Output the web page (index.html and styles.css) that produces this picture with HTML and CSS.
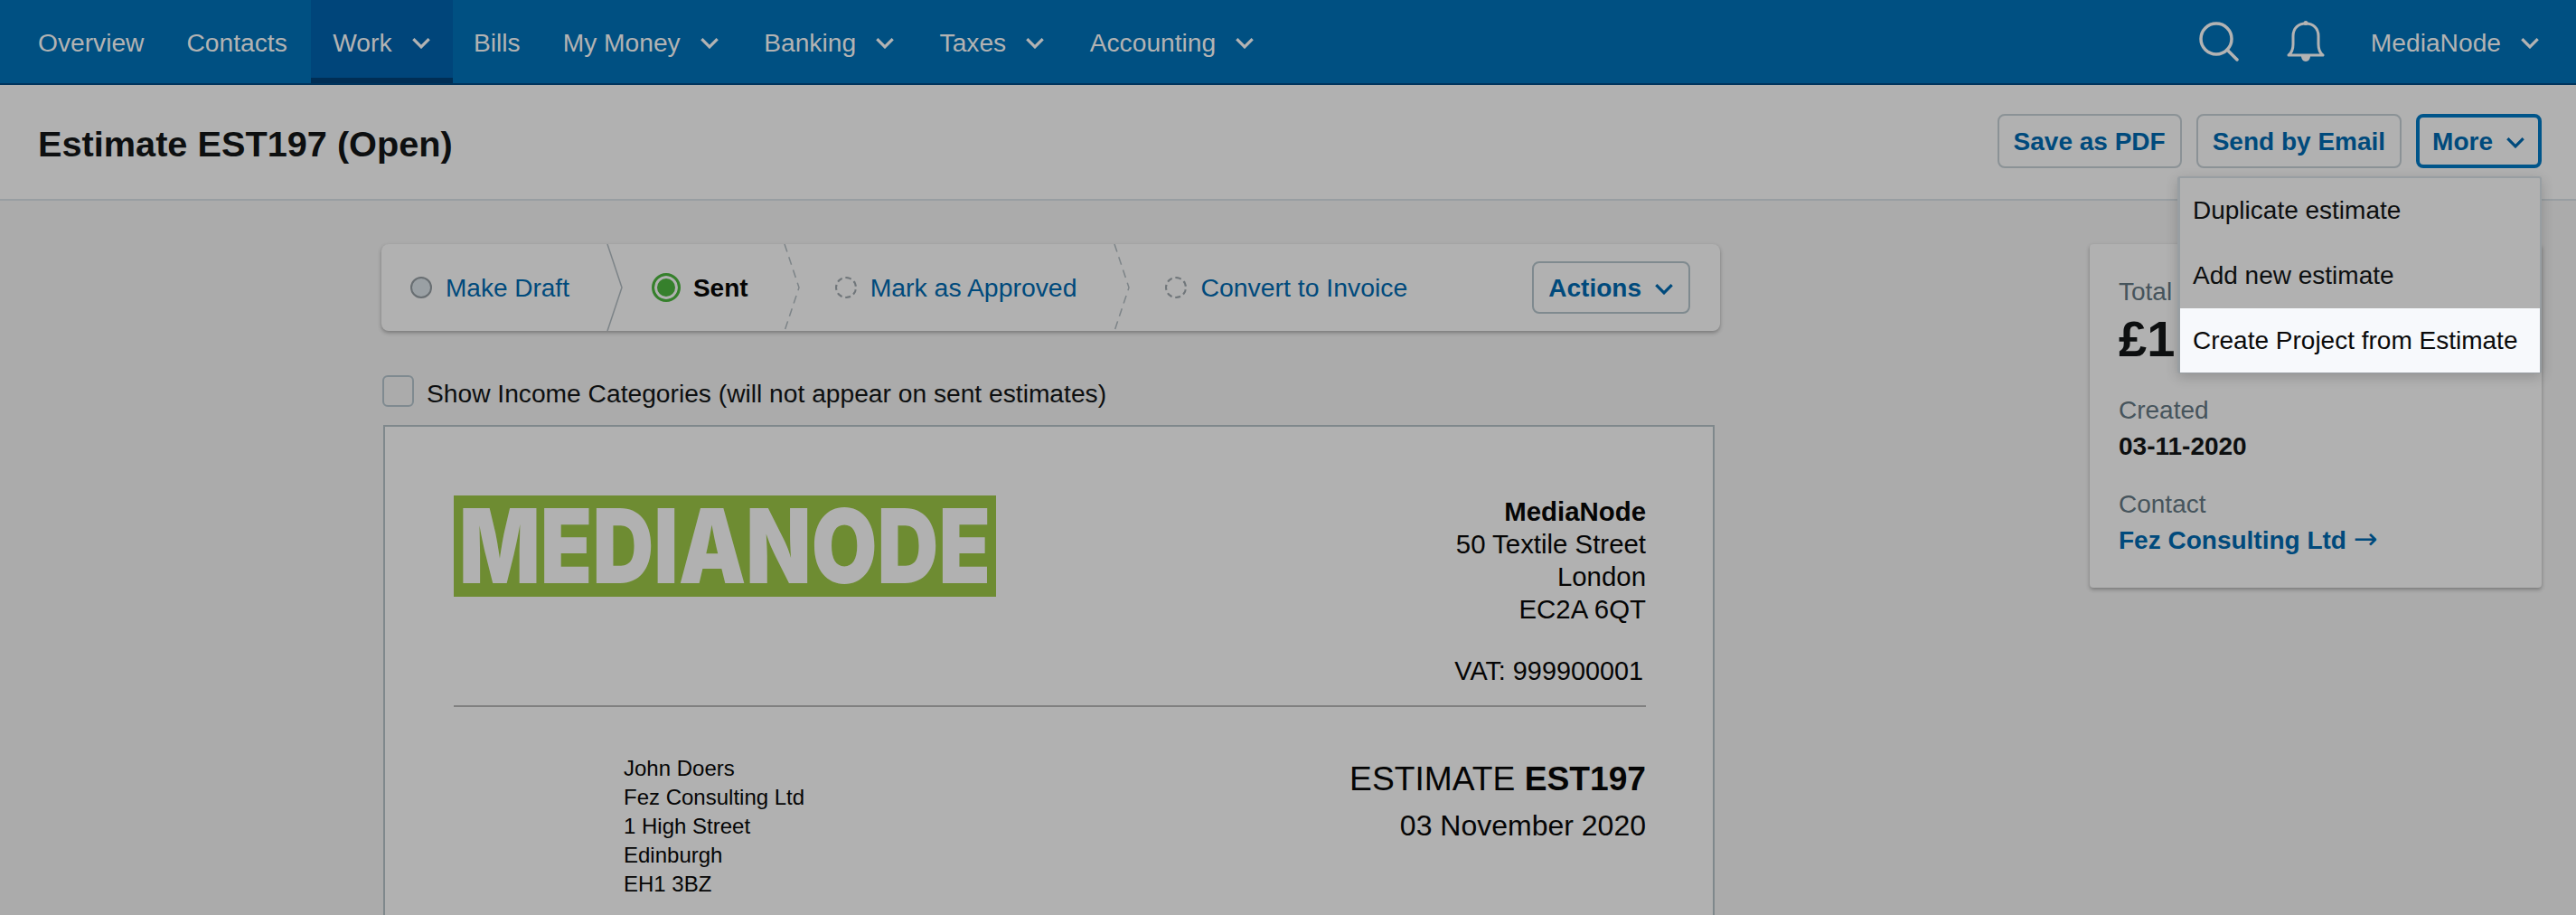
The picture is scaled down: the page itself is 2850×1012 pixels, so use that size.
FILE: index.html
```html
<!DOCTYPE html>
<html lang="en">
<head>
<meta charset="utf-8">
<title>Estimate EST197</title>
<link rel="stylesheet" href="styles.css">
</head>
<body>
<nav class="nav">
  <a class="nav-item">Overview</a>
  <a class="nav-item">Contacts</a>
  <a class="nav-item nav-item-active">Work <svg class="chev" viewBox="0 0 20 12"><path d="M2 2l8 8 8-8"/></svg></a>
  <a class="nav-item">Bills</a>
  <a class="nav-item nav-item-drop">My Money <svg class="chev" viewBox="0 0 20 12"><path d="M2 2l8 8 8-8"/></svg></a>
  <a class="nav-item nav-item-drop">Banking <svg class="chev" viewBox="0 0 20 12"><path d="M2 2l8 8 8-8"/></svg></a>
  <a class="nav-item nav-item-drop">Taxes <svg class="chev" viewBox="0 0 20 12"><path d="M2 2l8 8 8-8"/></svg></a>
  <a class="nav-item nav-item-drop">Accounting <svg class="chev" viewBox="0 0 20 12"><path d="M2 2l8 8 8-8"/></svg></a>
  <div class="nav-right">
    <svg class="icon-search" viewBox="0 0 44 44"><circle cx="19" cy="19" r="17"/><path d="M31 31l11 11"/></svg>
    <svg class="icon-bell" viewBox="0 0 42 46"><path d="M2 38c4-3 5-7 5-12V17C7 8 13 3 21 3s14 5 14 14v9c0 5 1 9 5 12z"/><path class="bell-fill" d="M16 39h10c0 3-2 6-5 6s-5-3-5-6z"/><circle class="bell-fill" cx="21" cy="2.500" r="2.500"/></svg>
    <a class="nav-user">MediaNode <svg class="chev" viewBox="0 0 20 12"><path d="M2 2l8 8 8-8"/></svg></a>
  </div>
</nav>

<header class="titlebar">
  <h1 class="title">Estimate EST197 (Open)</h1>
  <div class="title-actions">
    <button class="btn">Save as PDF</button>
    <button class="btn">Send by Email</button>
    <div class="more-wrap">
      <button class="btn btn-focus">More <svg class="chev chev-blue" viewBox="0 0 20 12"><path d="M2 2l8 8 8-8"/></svg></button>
      <ul class="menu">
        <li class="menu-item">Duplicate estimate</li>
        <li class="menu-item">Add new estimate</li>
        <li class="menu-item menu-item-hover">Create Project from Estimate</li>
      </ul>
    </div>
  </div>
</header>

<main class="main">
  <section class="content">
    <div class="stepper">
      <div class="step step-first"><span class="dot dot-draft"></span><a class="step-link">Make Draft</a></div>
      <svg class="sep" viewBox="0 0 18 96"><path d="M1 0l16 48L1 96"/></svg>
      <div class="step step-sent"><span class="dot dot-sent"></span><b class="step-current">Sent</b></div>
      <svg class="sep sep-dashed" viewBox="0 0 18 96"><path d="M1 0l16 48L1 96"/></svg>
      <div class="step step-approve"><span class="dot dot-todo"></span><a class="step-link">Mark as Approved</a></div>
      <svg class="sep sep-dashed" viewBox="0 0 18 96"><path d="M1 0l16 48L1 96"/></svg>
      <div class="step"><span class="dot dot-todo"></span><a class="step-link">Convert to Invoice</a></div>
      <button class="btn btn-actions">Actions <svg class="chev chev-blue" viewBox="0 0 20 12"><path d="M2 2l8 8 8-8"/></svg></button>
    </div>

    <label class="check-row"><span class="checkbox"></span><span class="check-text">Show Income Categories (will not appear on sent estimates)</span></label>

    <article class="doc">
      <div class="doc-top">
        <svg class="logo" viewBox="0 0 600 112" role="img" aria-label="MediaNode logo"><rect class="logo-bg" width="600" height="112"/><text class="logo-text" x="6" y="97" textLength="588" lengthAdjust="spacingAndGlyphs">MEDIANODE</text></svg>
        <div class="company">
          <strong>MediaNode</strong><br>50 Textile Street<br>London<br>EC2A 6QT
          <p class="vat">VAT: 999900001</p>
        </div>
      </div>
      <hr class="rule">
      <div class="doc-bottom">
        <div class="address">John Doers<br>Fez Consulting Ltd<br>1 High Street<br>Edinburgh<br>EH1 3BZ</div>
        <div class="doc-meta">
          <div class="doc-no">ESTIMATE <b>EST197</b></div>
          <div class="doc-date">03 November 2020</div>
        </div>
      </div>
    </article>
  </section>

  <aside class="summary">
    <div class="sum-label">Total</div>
    <div class="sum-total">£1,250.00</div>
    <div class="sum-label sum-gap">Created</div>
    <div class="sum-value">03-11-2020</div>
    <div class="sum-label sum-gap2">Contact</div>
    <a class="sum-link">Fez Consulting Ltd <span class="arrow">→</span></a>
  </aside>
</main>
</body>
</html>
```
FILE: styles.css
```css
* { box-sizing: border-box; }
html, body { margin: 0; height: 1012px; overflow: hidden; }
body {
  background: #ababab;
  color: #0d0f10;
  font-family: "Liberation Sans", Arial, sans-serif;
  font-size: 28px;
}

/* top navigation */
.nav {
  display: flex;
  align-items: stretch;
  height: 94px;
  padding-left: 18.500px;
  background: #005082;
  border-bottom: 2px solid #00345c;
  color: #b3b3b3;
  font-size: 28.200px;
}
.nav-item {
  display: flex;
  align-items: center;
  gap: 21px;
  height: 92px;
  padding: 2px 23.500px 0;
}
.nav-item-drop { padding-right: 26px; }
.nav-item-active {
  margin-left: 3px;
  padding: 8px 24px 0;
  background: #00457a;
  border-bottom: 6px solid #002e55;
}
.chev {
  width: 22px;
  height: 13px;
  margin-top: 1px;
  fill: none;
  stroke: #b3b3b3;
  stroke-width: 3;
}
.chev-blue { stroke: #004a7c; }
.nav-right {
  margin-left: auto;
  display: flex;
  align-items: center;
  padding-right: 40px;
}
.icon-search {
  width: 44px;
  height: 44px;
  margin-right: 53px;
  fill: none;
  stroke: #b3b3b3;
  stroke-width: 3.500;
  stroke-linecap: round;
}
.icon-bell {
  width: 42px;
  height: 46px;
  margin-right: 51px;
  fill: none;
  stroke: #b3b3b3;
  stroke-width: 3;
  stroke-linejoin: round;
}
.bell-fill { fill: #b3b3b3; stroke: none; }
.nav-user { display: flex; align-items: center; gap: 21px; padding-top: 2px; }

/* title bar */
.titlebar {
  display: flex;
  align-items: center;
  justify-content: space-between;
  height: 128px;
  padding: 0 38px 2px 42px;
  background: #b1b1b1;
  border-bottom: 2px solid #989ea2;
}
.title { margin: 6px 0 0; font-size: 39.700px; font-weight: 700; line-height: 48px; }
.title-actions { display: flex; gap: 16px; }
.btn {
  display: inline-flex;
  align-items: center;
  justify-content: center;
  gap: 14px;
  height: 60px;
  padding: 2px 16px 0;
  background: #b1b1b1;
  border: 2px solid #8b9296;
  border-radius: 8px;
  color: #004a7c;
  font: 700 28px "Liberation Sans", Arial, sans-serif;
}
.btn-focus { border: 4px solid #00558a; padding: 2px 14px 0; }
.more-wrap { position: relative; }
.menu {
  position: absolute;
  top: 69px;
  right: 0;
  z-index: 5;
  width: 403px;
  margin: 0;
  padding: 0;
  list-style: none;
  background: #b1b1b1;
  border: solid #989ea2;
  border-width: 2px 2px 1px 3px;
  border-radius: 3px;
  box-shadow: 0 4px 14px rgba(0, 0, 0, .18);
}
.menu-item { height: 72px; padding: 0 14px; line-height: 72px; white-space: nowrap; color: #0d0f10; }
.menu-item-hover { background: #f7f9fc; color: #0a0a0a; height: 71px; line-height: 71px; }

/* main */
.main { display: flex; align-items: flex-start; padding: 48px 38px 0 422px; }
.content { width: 1481px; }

.stepper {
  display: flex;
  align-items: center;
  height: 96px;
  background: #b1b1b1;
  border-radius: 8px;
  box-shadow: 0 2px 4px rgba(0, 0, 0, .3);
}
.step { display: flex; align-items: center; gap: 15px; padding: 0 41px 0 39px; white-space: nowrap; }
.step-first { padding-left: 32px; }
.step-sent { gap: 14px; padding: 0 39px 0 32px; }
.step-approve { padding-right: 41px; }
.step-link { color: #004a7c; padding-top: 1px; font-size: 28.400px; }
.step-first .step-link { font-size: 28px; }
.step-current { font-weight: 700; color: #050505; padding-top: 1px; }
.dot { display: block; flex: none; width: 24px; height: 24px; border-radius: 50%; }
.dot-draft { background: #9aa0a4; border: 2px solid #686e72; }
.dot-sent { width: 32px; height: 32px; border: 3px solid #36802c; background: #36802c; box-shadow: inset 0 0 0 3px #b1b1b1; }
.dot-todo { border: 2px dashed #70767a; }
.sep { flex: none; width: 18px; height: 96px; fill: none; stroke: #7d8488; stroke-width: 1.500; }
.sep-dashed { stroke-dasharray: 9 6; }
.btn-actions { margin-left: auto; margin-right: 33px; height: 58px; padding: 2px 16px 0; border-color: #7f8a8f; }

.check-row { display: flex; align-items: center; gap: 14px; height: 36px; margin-top: 48px; padding-left: 1px; }
.checkbox { width: 35px; height: 35px; border: 2px solid #7f8a90; border-radius: 6px; }
.check-text { align-self: flex-start; margin-top: 3px; font-size: 28.200px; line-height: 36px; }

.doc {
  width: 1473px;
  height: 560px;
  margin: 20px 0 0 2px;
  padding: 76px 74px 0 76px;
  background: #b1b1b1;
  border: 2px solid #7f888c;
  color: #050505;
}
.doc-top { display: flex; justify-content: space-between; align-items: flex-start; }
.logo { width: 600px; height: 112px; overflow: visible; }
.logo-bg { fill: #6e8c32; }
.logo-text { fill: #b1b1b1; font-family: Inter, "Liberation Sans", sans-serif; font-weight: 900; font-size: 114px; }
.company { font-size: 29.400px; line-height: 36px; text-align: right; }
.vat { margin: 32px 3px 0 0; font-size: 28.800px; line-height: 36px; }
.rule { height: 2px; margin: 20px 0 0; border: 0; background: #808080; }
.doc-bottom { display: flex; justify-content: space-between; align-items: flex-start; margin-top: 52px; padding-left: 188px; }
.address { font-size: 24px; line-height: 32px; }
.doc-meta { text-align: right; }
.doc-no { font-size: 37.200px; line-height: 44px; margin-top: 5px; }
.doc-date { font-size: 32px; line-height: 40px; margin-top: 10px; }

/* summary card */
.summary {
  width: 500px;
  height: 380px;
  margin-left: auto;
  padding: 35px 32px 0;
  background: #b1b1b1;
  border-radius: 4px;
  box-shadow: 0 2px 4px rgba(0, 0, 0, .3);
}
.sum-label { line-height: 36px; color: #46545c; }
.sum-total { margin-top: 4px; font-size: 56px; font-weight: 700; line-height: 60px; color: #0d0f10; }
.sum-gap { margin-top: 31px; }
.sum-gap2 { margin-top: 28px; }
.sum-value { margin-top: 4px; font-weight: 700; line-height: 36px; }
.sum-link { display: block; margin-top: 4px; font-weight: 700; line-height: 36px; color: #004a7c; white-space: nowrap; }
.arrow { font-family: "DejaVu Sans", sans-serif; font-weight: 400; font-size: 32px; line-height: 30px; }
```
